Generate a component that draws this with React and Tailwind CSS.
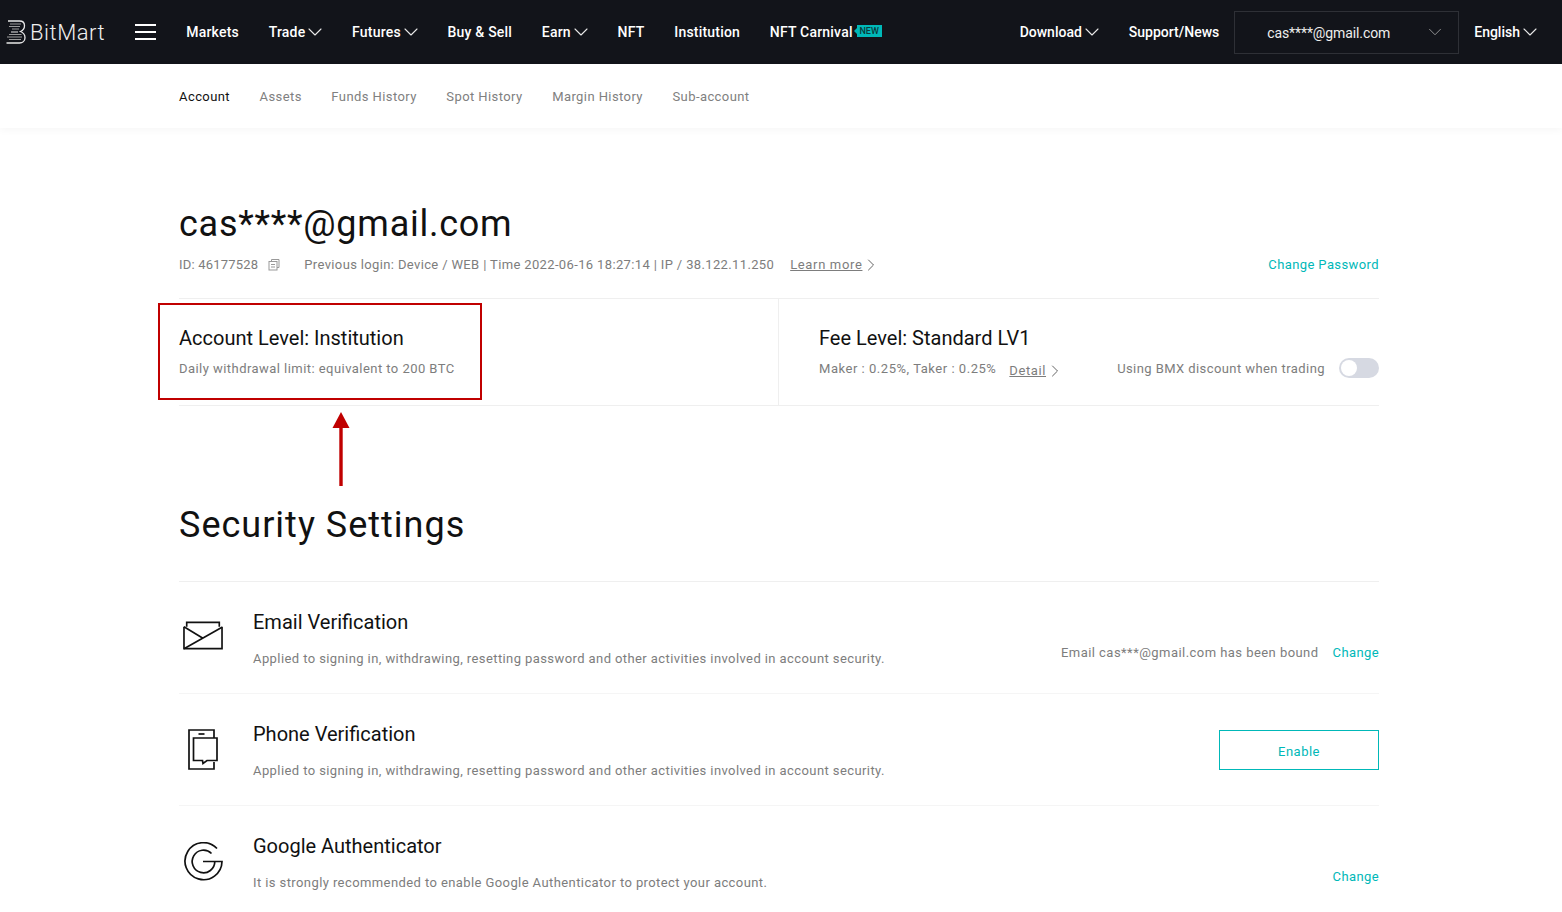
import React from 'react';
import { ChevronDown, ChevronRight } from 'lucide-react';

const navLeft = [
  { label: 'Markets' },
  { label: 'Trade', caret: true },
  { label: 'Futures', caret: true },
  { label: 'Buy & Sell' },
  { label: 'Earn', caret: true },
  { label: 'NFT' },
  { label: 'Institution' },
];

const subNav = ['Account', 'Assets', 'Funds History', 'Spot History', 'Margin History', 'Sub-account'];

const NavItem = ({ label, caret }) => (
  <span className="flex items-center gap-[4px] text-[14px] font-medium text-white whitespace-nowrap">
    {label}
    {caret && <ChevronDown size={24} strokeWidth={1.1} className="-ml-[6px] -mr-[5px] text-[#e8e8e8]" />}
  </span>
);

const Logo = () => (
  <svg width="20" height="24" viewBox="0 0 20 24" fill="none" stroke="#e8e8e8">
    <path d="M2 1H13.500C16.500 1 18.500 3 18.500 5.800 18.500 8.500 17 10.500 14.500 11.500 17 12.500 19 14.500 19 17.800 19 21 16.500 23 13.500 23H0.500" strokeWidth="1.300" />
    <path d="M4 4H15M3 6.500H14M6 9H13" strokeWidth="1.200" stroke="#9a9a9a" />
    <path d="M5 12H12" strokeWidth="1" />
    <path d="M3 14.500H15.500M1 17H16M3 19.500H15" strokeWidth="1.200" stroke="#9a9a9a" />
  </svg>
);

const EmailIcon = () => (
  <svg className="-mt-[4px]" width="41" height="29" viewBox="0 0 41 29" fill="none" stroke="#111" strokeWidth="1.700">
    <path d="M1 5.500V28H40V5.500" />
    <path d="M3.800 5.500V1H37.200V5.500" />
    <path d="M1 5.500 20 17M1 28 40 6" />
  </svg>
);

const PhoneIcon = () => (
  <svg width="30" height="41" viewBox="0 0 30 41" fill="none" stroke="#111" strokeWidth="1.700">
    <path d="M26 9V1H1V40H26V33" />
    <path d="M5.500 9H29V31.500H19L15 34.500 14.500 31.500H5.500Z" />
    <path d="M10.500 5H16.500" />
  </svg>
);

const GoogleIcon = () => (
  <svg className="-mt-[2px]" width="39" height="39" viewBox="0 0 39 39" fill="none" stroke="#111" strokeWidth="1.700">
    <path d="M33 6.500A18.500 18.500 0 1 0 38 19.500H19" />
    <path d="M27.500 11.500A11.300 11.300 0 1 0 30.800 19.500" />
  </svg>
);

const SecurityRow = ({ icon, title, desc, children, last }) => (
  <div className={`flex h-[112px] shrink-0 items-center ${last ? '' : 'border-b border-[#f5f5f5]'}`}>
    <div className="flex w-[74px] shrink-0 justify-start pl-[4px]">
      <div className="flex w-[40px] justify-center">{icon}</div>
    </div>
    <div className="flex-1 pt-[2px]">
      <div className="text-[20px] leading-[26px] text-[#111]">{title}</div>
      <div className="mt-[14px] text-[13px] leading-[20px] text-[#7d7d7d] tracking-[0.41px]">{desc}</div>
    </div>
    {children}
  </div>
);

export default function App() {
  return (
    <div className="relative h-[912px] overflow-hidden bg-white font-['Roboto',sans-serif]">
      {/* top bar */}
      <header className="flex h-[64px] items-center justify-between bg-[#12141a] pl-[6px] pr-[25px]">
        <div className="flex items-center">
          <Logo />
          <span className="ml-[4px] text-[22px] font-light text-[#f0f0f0] tracking-[0.55px]">BitMart</span>
          <div className="ml-[30px] flex h-[16px] w-[21px] flex-col justify-between">
            <span className="h-[2px] bg-white" />
            <span className="h-[2px] bg-white" />
            <span className="h-[2px] bg-white" />
          </div>
          <nav className="ml-[30px] flex items-center gap-[29.75px] tracking-[0.2px]">
            {navLeft.map((n) => <NavItem key={n.label} {...n} />)}
            <span className="relative flex items-center">
              <NavItem label="NFT Carnival" />
              <span className="relative -top-[1px] ml-[4px] flex h-[12px] w-[25px] items-center justify-center bg-[#00b8b8] text-[9px] font-medium leading-none tracking-normal text-[#0b3a3c]">
                <span className="absolute -left-[3px] top-[3px] h-0 w-0 border-y-[3px] border-r-[3px] border-y-transparent border-r-[#00b8b8]" />
                NEW
              </span>
            </span>
          </nav>
        </div>
        <div className="flex items-center">
          <NavItem label="Download" caret />
          <span className="ml-[30px]"><NavItem label="Support/News" /></span>
          <div className="ml-[15px] flex h-[43px] w-[225px] items-center justify-between border border-[#2e3036] pl-[32px] pr-[12px] text-[14px] tracking-[-0.1px] text-[#eeeeee]">
            <span className="pt-[2px]">cas****@gmail.com</span>
            <ChevronDown size={22} strokeWidth={0.9} className="text-[#aaaaaa]" />
          </div>
          <span className="ml-[15px]"><NavItem label="English" caret /></span>
        </div>
      </header>

      {/* sub nav */}
      <div className="flex h-[64px] items-center gap-[29.5px] bg-white pl-[179px] pt-[2px] shadow-[0_2px_8px_rgba(0,0,0,0.04)]">
        {subNav.map((s, i) => (
          <span key={s} className={`text-[13px] tracking-[0.42px] ${i === 0 ? 'text-[#111]' : 'text-[#808080]'}`}>{s}</span>
        ))}
      </div>

      <main className="ml-[179px] w-[1200px]">
        <h1 className="mt-[72px] text-[36px] leading-[48px] text-[#111] tracking-[0.75px]">cas****@gmail.com</h1>
        <div className="mt-[7px] flex h-[20px] items-center text-[13px] text-[#7d7d7d] tracking-[0.2px]">
          <span>ID: 46177528</span>
          <svg className="ml-[10px]" width="12" height="12" viewBox="0 0 12 12" fill="none" stroke="#999" strokeWidth="1">
            <path d="M3.500 2.500V.5H11V8.500H9" />
            <rect x="1" y="2.500" width="8" height="8.500" />
            <path d="M3 5.500H7M3 8H7" />
          </svg>
          <span className="ml-[24px] tracking-[0.36px]">Previous login: Device / WEB | Time 2022-06-16 18:27:14 | IP / 38.122.11.250</span>
          <span className="ml-[16px] underline tracking-[0.65px]">Learn more </span>
          <ChevronRight size={20} strokeWidth={1.1} className="-ml-[1px] text-[#555555]" />
          <span className="ml-auto text-[#00b8b8] tracking-[0.4px]">Change Password</span>
        </div>

        {/* levels */}
        <div className="mt-[23px] flex h-[108px] border-y border-[#efefef]">
          <div className="w-[600px] border-r border-[#efefef] pt-[26px]">
            <div className="text-[20px] leading-[26px] text-[#111]">Account Level: Institution</div>
            <div className="mt-[8px] text-[13px] leading-[20px] text-[#7d7d7d] tracking-[0.45px]">Daily withdrawal limit: equivalent to 200 BTC</div>
          </div>
          <div className="flex-1 pl-[40px] pt-[26px]">
            <div className="text-[20px] leading-[26px] text-[#111]">Fee Level: Standard LV1</div>
            <div className="mt-[6px] flex items-center text-[13px] leading-[20px] text-[#7d7d7d]">
              <span className="tracking-[0.53px]">Maker : 0.25%, Taker : 0.25%</span>
              <span className="ml-[13px] mt-[4px] underline tracking-[0.6px]">Detail </span>
              <ChevronRight size={20} strokeWidth={1.1} className="-ml-[1px] mt-[3px] text-[#555555]" />
              <span className="ml-auto tracking-[0.42px]">Using BMX discount when trading</span>
              <span className="-mt-[2px] ml-[14px] flex h-[20px] w-[40px] items-center rounded-full bg-[#d6d9e2] pl-[2px]">
                <span className="h-[16px] w-[16px] rounded-full bg-white" />
              </span>
            </div>
          </div>
        </div>

        <h2 className="mt-[94px] text-[36px] leading-[50px] text-[#111] tracking-[1px]">Security Settings</h2>

        <div className="mt-[31px] border-t border-[#efefef]">
          <SecurityRow
            icon={<EmailIcon />}
            title="Email Verification"
            desc="Applied to signing in, withdrawing, resetting password and other activities involved in account security."
          >
            <span className="mt-[30px] text-[13px] text-[#7d7d7d] tracking-[0.45px]">Email cas***@gmail.com has been bound</span>
            <span className="ml-[14px] mt-[30px] text-[13px] text-[#00b8b8] tracking-[0.4px]">Change</span>
          </SecurityRow>
          <SecurityRow
            icon={<PhoneIcon />}
            title="Phone Verification"
            desc="Applied to signing in, withdrawing, resetting password and other activities involved in account security."
          >
            <button className="h-[40px] w-[160px] border border-[#00b8b8] pt-[5px] text-[13px] text-[#00b8b8] tracking-[0.5px]">Enable</button>
          </SecurityRow>
          <SecurityRow
            icon={<GoogleIcon />}
            title="Google Authenticator"
            desc="It is strongly recommended to enable Google Authenticator to protect your account."
            last
          >
            <span className="mt-[30px] text-[13px] text-[#00b8b8] tracking-[0.4px]">Change</span>
          </SecurityRow>
        </div>
      </main>

      {/* red annotation over the page */}
      <div className="absolute left-[158px] top-[303px] h-[97px] w-[324px] border-2 border-[#c00000]" />
      <svg className="absolute left-[330px] top-[412px]" width="22" height="74" viewBox="0 0 22 74">
        <path d="M11 0 19.500 16H12.700V74H9.300V16H2.500Z" fill="#c00000" />
      </svg>
    </div>
  );
}
